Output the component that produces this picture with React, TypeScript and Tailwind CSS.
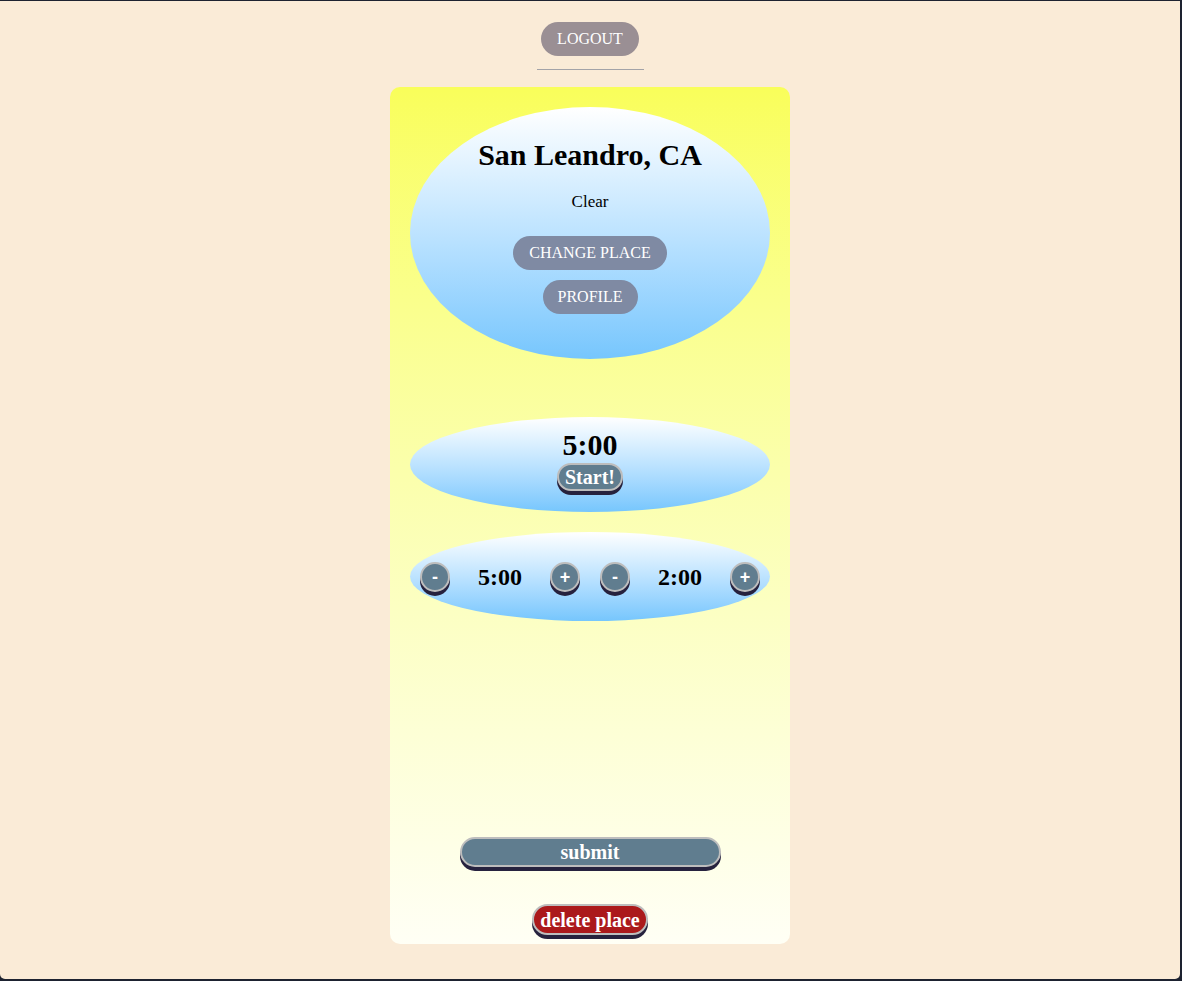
import React from 'react';

const serif = { fontFamily: '"Liberation Serif", "Times New Roman", serif' };

const PillButton: React.FC<{ label: string; className?: string }> = ({ label, className = '' }) => (
  <button className={`rounded-full text-white text-[16px] leading-none h-[34px] ${className}`}>
    {label}
  </button>
);

const RaisedButton: React.FC<{ label: string; className?: string }> = ({ label, className = '' }) => (
  <button
    className={`border-2 border-[#bdbdbd] text-white font-bold text-[20px] leading-none shadow-[0_4px_0_#26223e] ${className}`}
  >
    {label}
  </button>
);

const Circle: React.FC<{ label: string }> = ({ label }) => (
  <button className="w-[30px] h-[30px] rounded-full border-2 border-[#bdbdbd] bg-[#607d8f] text-white font-bold text-[18px] leading-none shadow-[0_4px_0_#26223e] flex items-center justify-center font-['Liberation_Sans',sans-serif]">
    {label}
  </button>
);

export default function App() {
  return (
    <div className="w-[1182px] h-[981px] bg-[#1d2230] pt-px pr-[2px] pb-[2px]" style={serif}>
      <div className="h-full bg-[#faebd7] rounded-b-[5px] flex flex-col items-center">
        <PillButton label="LOGOUT" className="mt-[21px] bg-[#9a8f94] w-[98px]" />
        <div className="mt-[13px] w-[107px] h-px bg-[#a3a3a8]" />

        <div className="mt-[17px] w-[400px] h-[857px] rounded-[10px] bg-gradient-to-b from-[#f9fe5a] to-[#fffff5] flex flex-col items-center pt-5">
          <div className="w-[360px] h-[252px] rounded-[50%] bg-gradient-to-b from-[#ffffff] to-[#76c6fd] flex flex-col items-center pt-[30px]">
            <h1 className="text-[30px] font-bold leading-[35px]">San Leandro, CA</h1>
            <p className="mt-[20px] text-[17px] leading-5">Clear</p>
            <PillButton label="CHANGE PLACE" className="mt-[24px] bg-[#7f8aa3] w-[154px]" />
            <PillButton label="PROFILE" className="mt-[10px] bg-[#7f8aa3] w-[95px]" />
          </div>

          <div className="mt-[58px] w-[360px] h-[95px] rounded-[50%] bg-gradient-to-b from-[#ffffff] to-[#76c6fd] flex flex-col items-center pt-[12px]">
            <div className="text-[30px] font-bold leading-[32px]">5:00</div>
            <RaisedButton label="Start!" className="mt-[2px] rounded-[14px] bg-[#607d8f] w-[66px] h-[28px]" />
          </div>

          <div className="mt-[20px] w-[360px] h-[89px] rounded-[50%] bg-gradient-to-b from-[#ffffff] to-[#76c6fd] flex items-center pl-[10px]">
            <Circle label="-" />
            <div className="w-[100px] text-center text-[24px] font-bold">5:00</div>
            <Circle label="+" />
            <div className="w-[20px]" />
            <Circle label="-" />
            <div className="w-[100px] text-center text-[24px] font-bold">2:00</div>
            <Circle label="+" />
          </div>

          <RaisedButton label="submit" className="mt-[216px] rounded-full bg-[#607d8f] w-[261px] h-[30px]" />
          <RaisedButton label="delete place" className="mt-[37px] rounded-full bg-[#ab191b] w-[116px] h-[31px]" />
        </div>
      </div>
    </div>
  );
}
